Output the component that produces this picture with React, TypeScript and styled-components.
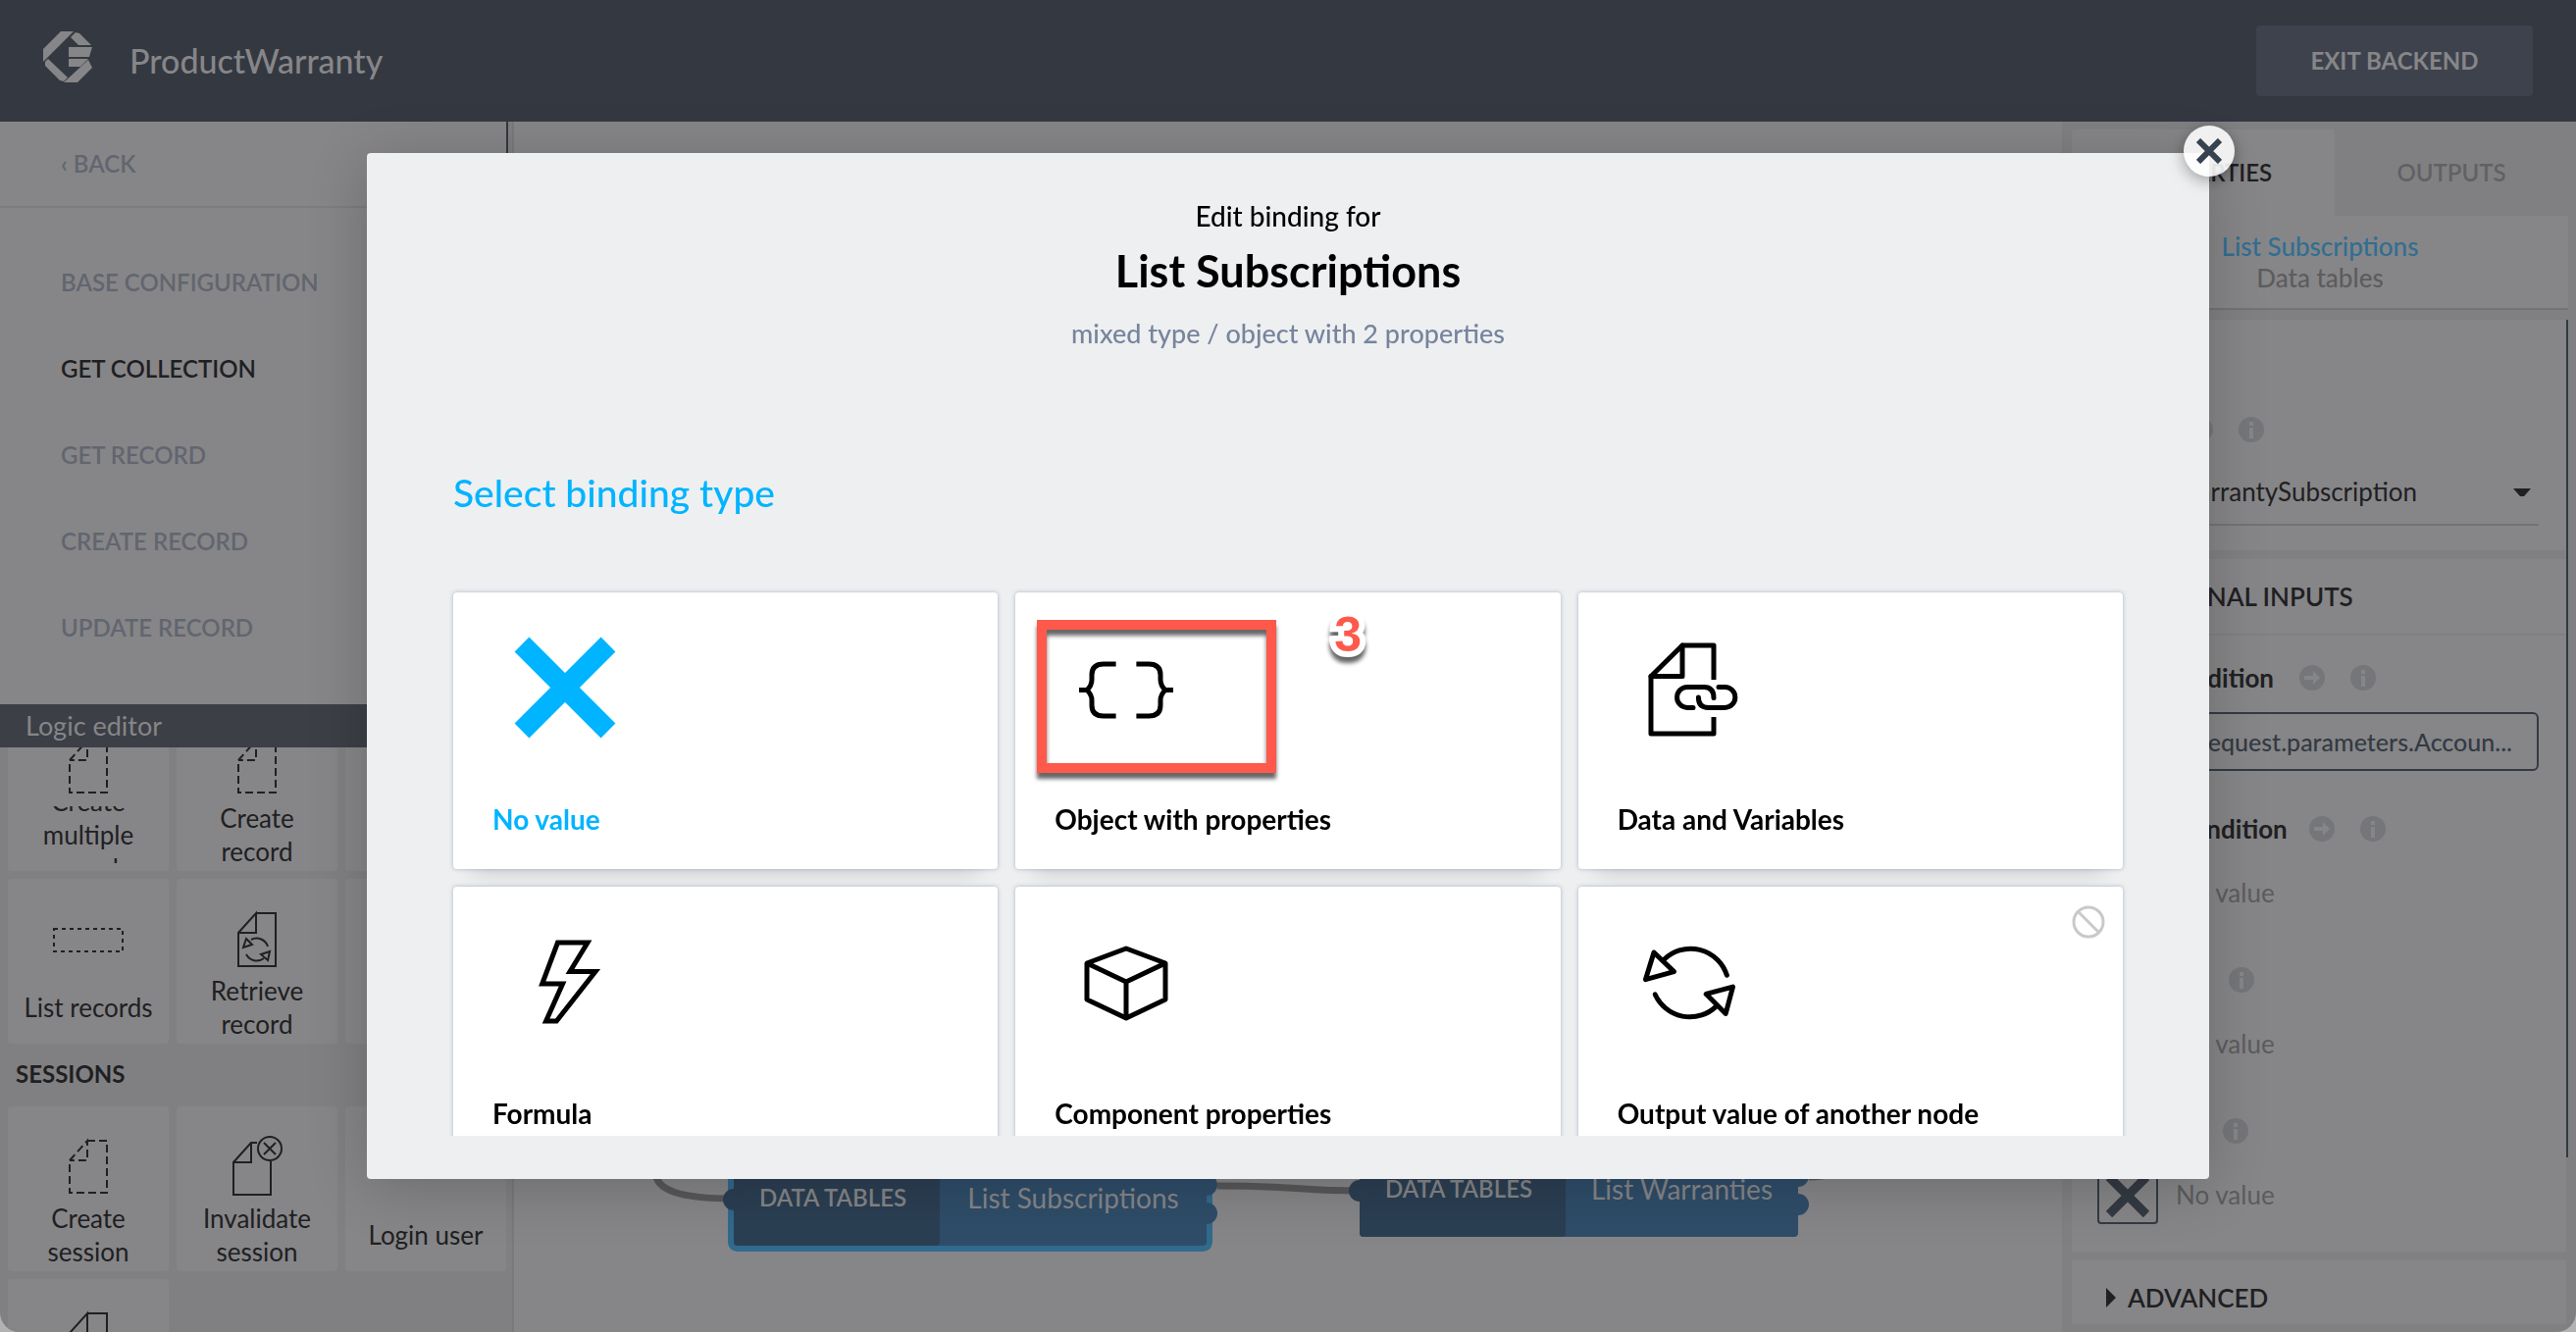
import React from "react";
import styled, { createGlobalStyle, css } from "styled-components";

const c = {
  header: "#343841",
  headerBtn: "#3e424d",
  surface: "#868688",
  backdrop: "#808082",
  line: "#7d7d7f",
  ink: "#1f2022",
  slate: "#343a43",
  muted: "#5c5c5e",
  menu: "#62656f",
  blue: "#00b4ff",
  dimBlue: "#316e92",
  modal: "#eeeff1",
  red: "#ff594b",
};

const Global = createGlobalStyle`
  *, *::before, *::after { box-sizing: border-box; }
  body {
    margin: 0;
    background: #b2b2b2;
    font-family: Lato, "Open Sans", sans-serif;
    font-size: 26px;
    line-height: 34px;
    color: ${c.ink};
  }
  button, input, select { font: inherit; color: inherit; margin: 0; }
  h1, h2, h3, p, ul { margin: 0; padding: 0; font: inherit; }
`;

const Window = styled.div`
  height: 100vh;
  display: flex;
  flex-direction: column;
  overflow: hidden;
  border-radius: 0 0 20px 20px;
  background: ${c.backdrop};
`;

/* ---------- header ---------- */

const Header = styled.header`
  flex: none;
  height: 124px;
  padding: 0 44px;
  display: flex;
  align-items: center;
  background: ${c.header};
  color: ${c.surface};
`;

const Logo = styled.svg`
  width: 50px;
  height: 52px;
  margin-bottom: 8px;
  fill: ${c.surface};
`;

const AppName = styled.h1`
  flex: 1;
  margin-left: 38px;
  font-size: 34px;
  font-weight: 500;
`;

const ExitButton = styled.button`
  width: 282px;
  height: 72px;
  border: 0;
  border-radius: 4px;
  background: ${c.headerBtn};
  font-size: 24px;
  font-weight: 700;
`;

const Body = styled.div`
  flex: 1;
  min-height: 0;
  display: flex;
`;

/* ---------- left side ---------- */

const Sidebar = styled.aside`
  width: 524px;
  flex: none;
  display: flex;
  flex-direction: column;
  border-right: 2px solid #79797b;
`;

const Menu = styled.nav`
  flex: none;
  height: 594px;
  margin-right: 4px;
  overflow: hidden;
  background: ${c.surface};
  border-right: 2px solid ${c.header};
  font-size: 24px;
  font-weight: 600;
`;

const MenuBack = styled.a`
  display: flex;
  align-items: center;
  height: 88px;
  padding-left: 62px;
  border-bottom: 2px solid ${c.line};
  color: ${c.menu};
  text-decoration: none;
`;

const MenuList = styled.ul`
  list-style: none;
  padding-top: 32px;
`;

const MenuLink = styled.a<{ $active?: boolean }>`
  display: flex;
  align-items: center;
  height: 88px;
  padding-left: 62px;
  color: ${(p) => (p.$active ? c.ink : c.menu)};
  text-decoration: none;
`;

const EditorBar = styled.div`
  flex: none;
  height: 44px;
  padding-left: 26px;
  display: flex;
  align-items: center;
  background: #3c3f46;
  color: ${c.surface};
  font-size: 27px;
`;

const Palette = styled.div`
  flex: 1;
  min-height: 0;
  overflow: hidden;
  padding: 0 6px 0 8px;
`;

const TileGrid = styled.div<{ $scrolled?: boolean }>`
  display: grid;
  grid-template-columns: repeat(3, 1fr);
  gap: 8px;
  margin-top: ${(p) => (p.$scrolled ? "-42px" : "0")};
`;

const TileButton = styled.button`
  height: 168px;
  padding: 34px 4px 8px;
  display: flex;
  flex-direction: column;
  align-items: center;
  justify-content: space-between;
  border: 0;
  border-radius: 4px;
  background: ${c.surface};
`;

const TileLabel = styled.span`
  height: 58px;
  width: 100%;
  display: flex;
  flex-direction: column;
  justify-content: center;
  overflow: hidden;
  text-align: center;
  span { flex: none; white-space: nowrap; }
`;

const GroupTitle = styled.h3`
  height: 64px;
  padding: 0 8px 2px;
  display: flex;
  align-items: center;
  font-size: 24px;
  font-weight: 700;
`;

const TileIcon = styled.svg`
  width: 72px;
  height: 56px;
  flex: none;
  fill: none;
  stroke: ${c.ink};
  stroke-width: 2;
  overflow: visible;
`;

/* ---------- canvas ---------- */

const Canvas = styled.main`
  flex: 1;
  min-width: 0;
  position: relative;
  overflow: hidden;
  background: ${c.surface};
`;

const Wires = styled.svg`
  position: absolute;
  inset: 0;
  width: 100%;
  height: 100%;
  fill: none;
  stroke: #58585a;
  stroke-width: 7;
`;

const FlowNode = styled.div<{ $x: number; $y: number; $w: number; $selected?: boolean }>`
  position: absolute;
  left: ${(p) => p.$x}px;
  top: ${(p) => p.$y}px;
  width: ${(p) => p.$w}px;
  height: 98px;
  display: flex;
  border-radius: 4px;
  background: #2f4d69;
  color: ${c.surface};
  ${(p) => p.$selected && css`box-shadow: 0 0 0 6px #316a8c;`}
`;

const NodeKind = styled.span`
  width: 210px;
  padding-right: 8px;
  display: flex;
  align-items: center;
  justify-content: center;
  border-radius: 4px;
  background: #2b3f53;
  font-size: 24px;
  font-weight: 600;
`;

const NodeName = styled.span`
  flex: 1;
  display: flex;
  align-items: center;
  justify-content: center;
  font-size: 28px;
`;

const Port = styled.i<{ $side: "left" | "right"; $y: number }>`
  position: absolute;
  ${(p) => p.$side}: -11px;
  top: ${(p) => p.$y}px;
  width: 22px;
  height: 22px;
  border-radius: 50%;
  background: ${(p) => (p.$side === "left" ? "#2b3f53" : "#2f4d69")};
`;

/* ---------- inspector ---------- */

const Inspector = styled.aside`
  width: 524px;
  flex: none;
  padding: 8px 8px 8px 10px;
  display: flex;
  flex-direction: column;
`;

const Tabs = styled.div`
  flex: none;
  height: 88px;
  display: flex;
`;

const Tab = styled.button<{ $active?: boolean }>`
  width: ${(p) => (p.$active ? "268px" : "auto")};
  flex: ${(p) => (p.$active ? "none" : "1")};
  border: 0;
  border-radius: 4px 4px 0 0;
  background: ${(p) => (p.$active ? c.surface : "transparent")};
  color: ${(p) => (p.$active ? c.ink : "#616163")};
  font-size: 24px;
  font-weight: 600;
`;

const Subject = styled.div`
  flex: none;
  height: 96px;
  padding-top: 15px;
  border-bottom: 2px solid #737375;
  background: ${c.surface};
  text-align: center;
  line-height: 32px;
  font-size: 26px;
  font-weight: 500;
  strong { display: block; font-weight: 500; color: ${c.dimBlue}; }
  span { color: ${c.muted}; }
`;

const Scroller = styled.div`
  flex: 1;
  min-height: 0;
  margin-top: 10px;
  display: flex;
`;

const ScrollContent = styled.div`
  flex: 1;
  min-width: 0;
  overflow: hidden;
`;

const ScrollThumb = styled.div`
  width: 2px;
  height: 854px;
  background: ${c.header};
`;

const Section = styled.section<{ $top: number; $bottom: number }>`
  padding: ${(p) => p.$top}px 28px ${(p) => p.$bottom}px 26px;
  margin-bottom: 9px;
  background: ${c.surface};
`;

const SectionTitle = styled.h2`
  height: 78px;
  padding: 0 35px;
  display: flex;
  align-items: center;
  gap: 12px;
  border-bottom: 2px solid #808082;
  background: ${c.surface};
  font-size: 26px;
  font-weight: 600;
`;

const Field = styled.div`
  height: 154px;
  &:last-child { height: 145px; }
`;

const FieldHead = styled.div`
  height: 44px;
  display: flex;
  align-items: center;
  gap: 26px;
`;

const FieldLabel = styled.label<{ $w: number }>`
  width: ${(p) => p.$w}px;
  text-align: right;
  white-space: nowrap;
  font-size: 26px;
  font-weight: 700;
`;

const Badge = styled.svg`
  width: 26px;
  height: 26px;
  flex: none;
  fill: #757679;
`;

const TextInput = styled.input`
  display: block;
  width: 100%;
  height: 60px;
  margin-top: 13px;
  padding: 0 25px;
  border: 2px solid ${c.slate};
  border-radius: 6px;
  background: transparent;
  color: ${c.slate};
  font-size: 25px;
  font-weight: 500;
  text-align: right;
`;

const SelectWrap = styled.div`
  position: relative;
  margin-top: 8px;
  border-bottom: 2px solid #737375;
`;

const Select = styled.select`
  width: 100%;
  height: 66px;
  padding: 0 124px 0 0;
  border: 0;
  appearance: none;
  background: transparent;
  text-align: right;
  text-align-last: right;
`;

const Caret = styled.svg`
  position: absolute;
  right: 8px;
  top: 30px;
  width: 18px;
  height: 8px;
  fill: ${c.ink};
`;

const NoValue = styled.div`
  display: flex;
  align-items: center;
  gap: 18px;
  margin-top: 13px;
  color: ${c.muted};
`;

const BindButton = styled.button`
  width: 62px;
  height: 60px;
  padding: 6px;
  border: 2px solid ${c.slate};
  border-radius: 4px;
  background: transparent;
  svg { display: block; width: 46px; height: 46px; stroke: ${c.slate}; stroke-width: 9; fill: none; }
`;

/* ---------- dialog ---------- */

const Overlay = styled.div`
  position: fixed;
  inset: 0;
  padding: 156px 374px;
  display: flex;
`;

const Dialog = styled.div`
  position: relative;
  flex: 1;
  min-width: 0;
  display: flex;
  flex-direction: column;
  padding: 44px 88px;
  border-radius: 4px;
  background: ${c.modal};
  box-shadow: 0 8px 60px rgba(0, 0, 0, 0.2);
  color: #000;
`;

const CloseButton = styled.button`
  position: absolute;
  right: -26px;
  top: -28px;
  width: 52px;
  height: 52px;
  padding: 13px;
  border: 0;
  border-radius: 50%;
  background: rgba(255, 255, 255, 0.88);
  box-shadow: 0 4px 16px rgba(0, 0, 0, 0.35);
  svg { display: block; width: 26px; height: 26px; stroke: #37424f; stroke-width: 6; }
`;

const DialogHead = styled.div`
  height: 264px;
  text-align: center;
`;

const Eyebrow = styled.p`
  font-size: 28px;
  font-weight: 500;
  line-height: 40px;
`;

const DialogTitle = styled.h2`
  font-size: 45px;
  font-weight: 700;
  line-height: 72px;
`;

const TypeNote = styled.p`
  font-size: 27px;
  font-weight: 500;
  line-height: 56px;
  color: #76859c;
`;

const StepTitle = styled.h3`
  height: 136px;
  font-size: 39px;
  font-weight: 500;
  line-height: 76px;
  color: ${c.blue};
`;

const CardScroll = styled.div`
  flex: 1;
  min-height: 0;
  overflow: hidden;
  margin: 0 -20px;
  padding: 4px 20px 0;
`;

const CardGrid = styled.div`
  display: grid;
  grid-template-columns: repeat(3, 1fr);
  grid-auto-rows: 282px;
  gap: 18px;
`;

const Card = styled.button<{ $active?: boolean }>`
  position: relative;
  display: flex;
  flex-direction: column;
  align-items: flex-start;
  padding: 38px 40px 32px;
  border: 0;
  border-radius: 4px;
  background: #fff;
  color: ${(p) => (p.$active ? c.blue : "#000")};
  box-shadow: 0 0 4px rgba(110, 120, 150, 0.5), 0 24px 20px -20px rgba(0, 0, 0, 0.14);
  font-size: 28px;
  font-weight: 700;
`;

const CardIcon = styled.svg`
  width: 120px;
  height: 120px;
  margin: 0 0 56px 14px;
  fill: none;
  stroke: currentColor;
  stroke-width: 5;
`;

const Blocked = styled.svg`
  position: absolute;
  top: 19px;
  right: 18px;
  width: 34px;
  height: 34px;
  fill: none;
  stroke: #c9c9c9;
  stroke-width: 3;
`;

const Highlight = styled.span`
  position: absolute;
  left: 22px;
  top: 28px;
  width: 244px;
  height: 156px;
  border: 10px solid ${c.red};
  box-shadow: 0 6px 4px rgba(0, 0, 0, 0.6), inset 0 6px 4px rgba(0, 0, 0, 0.6);
`;

const StepNumber = styled.span`
  position: absolute;
  left: 325px;
  top: 13px;
  font: 700 50px/60px "Liberation Sans", Arial, sans-serif;
  color: ${c.red};
  -webkit-text-stroke: 12px #fff;
  paint-order: stroke fill;
  stroke-linejoin: round;
  filter: drop-shadow(0 6px 2px rgba(0, 0, 0, 0.6));
`;

/* ---------- drawings ---------- */

const DashedDoc = () => (
  <TileIcon viewBox="0 0 72 56" strokeDasharray="8 4">
    <path d="M35 1H55V54H17V21L35 1V21H17" />
  </TileIcon>
);

const PlainDoc = () => (
  <TileIcon viewBox="0 0 72 56">
    <path d="M35 1H55V54H17V21L35 1V21H17" />
  </TileIcon>
);

const ListIcon = () => (
  <TileIcon viewBox="0 0 72 56" strokeDasharray="4 4">
    <rect x="1" y="17" width="70" height="23" />
  </TileIcon>
);

const SyncDoc = () => (
  <TileIcon viewBox="0 0 72 56">
    <path d="M35 1H55V55H17V21L35 1V21H17" />
    <path d="M47 35A12 12 0 0 0 30 28M25 43A12 12 0 0 0 43 47" />
    <path d="M25 27L31 33L22 36ZM49 40L47 49L40 43Z" />
  </TileIcon>
);

const CancelDoc = () => (
  <TileIcon viewBox="0 0 72 56">
    <path d="M50 22V56H12V23L30 3H36M30 3V23H12" />
    <circle cx="49" cy="9" r="12" />
    <path d="M43 3L55 15M55 3L43 15" />
  </TileIcon>
);

const InfoBadge = () => (
  <Badge viewBox="0 0 26 26">
    <circle cx="13" cy="13" r="13" />
    <path d="M11 5H15V9H11ZM11 11H15V22H11Z" fill={c.surface} />
  </Badge>
);

const ArrowBadge = () => (
  <Badge viewBox="0 0 26 26">
    <circle cx="13" cy="13" r="13" />
    <path d="M5 11H14V6L21 13L14 20V15H5Z" fill={c.surface} />
  </Badge>
);

const Cross = () => (
  <svg viewBox="0 0 46 46">
    <path d="M4 4L42 42M42 4L4 42" />
  </svg>
);

const Disclosure = () => (
  <svg width="10" height="20" viewBox="0 0 10 20">
    <path d="M0 0L10 10L0 20Z" fill={c.ink} />
  </svg>
);

const cardIcons = {
  none: <path d="M16 15L104 103M104 15L16 103" strokeWidth="21" />,
  object: (
    <path d="M48.6 35H36Q24 35 24 46V51Q24 57 19 61.5Q24 66 24 72V77Q24 88 36 88H48.6M11 61.5H20M69.4 35H82Q94 35 94 46V51Q94 57 99 61.5Q94 66 94 72V77Q94 88 82 88H69.4M107 61.5H98" />
  ),
  data: (
    <g strokeLinecap="round" strokeLinejoin="round">
      <path d="M84 51V16H52L20 47.500V106H84V89" strokeLinecap="butt" />
      <path d="M52 16V47.500H20" />
      <path d="M84 69.500Q84 58.500 74 58.500H57A10.400 10.400 0 0 0 57 79.400H63" />
      <path d="M68.400 69Q68.400 79.400 78.500 79.400H95.400A10.400 10.400 0 0 0 95.400 58.500H89" />
    </g>
  ),
  formula: <path d="M52.500 19H83L65 48.500H91L51.300 99H40.600L57.600 61H36.700Z" />,
  component: (
    <g strokeLinejoin="round">
      <path d="M59 25L99 40V77L59 96L19 77V40ZM19 40L59 59L99 40M59 59V96" />
    </g>
  ),
  output: (
    <g strokeLinecap="round" strokeLinejoin="round">
      <path d="M97.400 52.300A38.700 38.700 0 0 0 33.300 36.300M24.300 71.900A38.700 38.700 0 0 0 86.400 84.100" />
      <path d="M23 29L43.500 48.600L14.500 56.600ZM103.500 64.100L96.200 91.400L76.200 71.400Z" />
    </g>
  ),
};

/* ---------- data ---------- */

const menuItems = ["BASE CONFIGURATION", "GET COLLECTION", "GET RECORD", "CREATE RECORD", "UPDATE RECORD", "REPLACE RECORD"];

const cards: { label: string; icon: keyof typeof cardIcons; active?: boolean; marked?: boolean; blocked?: boolean }[] = [
  { label: "No value", icon: "none", active: true },
  { label: "Object with properties", icon: "object", marked: true },
  { label: "Data and Variables", icon: "data" },
  { label: "Formula", icon: "formula" },
  { label: "Component properties", icon: "component" },
  { label: "Output value of another node", icon: "output", blocked: true },
];

const Tile = ({ lines, icon }: { lines: string[]; icon?: React.ReactNode }) => (
  <TileButton type="button">
    {icon ?? <TileIcon viewBox="0 0 72 56" />}
    <TileLabel>
      {lines.map((l) => (
        <span key={l}>{l}</span>
      ))}
    </TileLabel>
  </TileButton>
);

const Head = ({ id, label, width }: { id: string; label: string; width: number }) => (
  <FieldHead>
    <FieldLabel htmlFor={id} $w={width}>{label}</FieldLabel>
    <ArrowBadge />
    <InfoBadge />
  </FieldHead>
);

const EmptyField = ({ id, label, width }: { id: string; label: string; width: number }) => (
  <Field>
    <Head id={id} label={label} width={width} />
    <NoValue>
      <BindButton type="button" id={id} aria-label={`Edit ${label}`}><Cross /></BindButton>
      No value
    </NoValue>
  </Field>
);

export default function App() {
  return (
    <>
      <Global />
      <Window>
        <Header>
          <Logo viewBox="0 0 50 52">
            <path d="M18 0H31L0 31V18Z" />
            <path d="M33 1L37 2L49 14H36L28 6Z" />
            <path d="M26 16H50L47 26H26Z" />
            <path d="M26 28H46L38 36H26Z" />
            <path d="M46 29L50 37L35 52H21Z" />
            <path d="M5 28L25 47L21 51L17 50L2 35V31Z" />
          </Logo>
          <AppName>ProductWarranty</AppName>
          <ExitButton type="button">EXIT BACKEND</ExitButton>
        </Header>
        <Body>
          <Sidebar>
            <Menu>
              <MenuBack href="#back">‹ BACK</MenuBack>
              <MenuList>
                {menuItems.map((m) => (
                  <li key={m}>
                    <MenuLink href="#section" $active={m === "GET COLLECTION"}>{m}</MenuLink>
                  </li>
                ))}
              </MenuList>
            </Menu>
            <EditorBar>Logic editor</EditorBar>
            <Palette>
              <TileGrid $scrolled>
                <Tile lines={["Create", "multiple", "records"]} icon={<DashedDoc />} />
                <Tile lines={["Create", "record"]} icon={<DashedDoc />} />
                <Tile lines={[]} />
                <Tile lines={["List records"]} icon={<ListIcon />} />
                <Tile lines={["Retrieve", "record"]} icon={<SyncDoc />} />
                <Tile lines={[]} />
              </TileGrid>
              <GroupTitle>SESSIONS</GroupTitle>
              <TileGrid>
                <Tile lines={["Create", "session"]} icon={<DashedDoc />} />
                <Tile lines={["Invalidate", "session"]} icon={<CancelDoc />} />
                <Tile lines={["Login user"]} />
                <Tile lines={[]} icon={<PlainDoc />} />
              </TileGrid>
            </Palette>
          </Sidebar>

          <Canvas>
            <Wires>
              <path d="M144 1070C144 1090 170 1098 224 1098M717 1085C800 1085 800 1090 860 1090M1320 1076C1340 1076 1345 1072 1350 1060" />
            </Wires>
            <FlowNode $x={224} $y={1048} $w={482} $selected>
              <Port $side="left" $y={40} />
              <Port $side="right" $y={25} />
              <Port $side="right" $y={54} />
              <NodeKind>DATA TABLES</NodeKind>
              <NodeName>List Subscriptions</NodeName>
            </FlowNode>
            <FlowNode $x={862} $y={1039} $w={447}>
              <Port $side="left" $y={40} />
              <Port $side="right" $y={25} />
              <Port $side="right" $y={54} />
              <NodeKind>DATA TABLES</NodeKind>
              <NodeName>List Warranties</NodeName>
            </FlowNode>
          </Canvas>

          <Inspector>
            <Tabs>
              <Tab type="button" $active>PROPERTIES</Tab>
              <Tab type="button">OUTPUTS</Tab>
            </Tabs>
            <Subject>
              <strong>List Subscriptions</strong>
              <span>Data tables</span>
            </Subject>
            <Scroller>
              <ScrollContent>
                <Section $top={90} $bottom={25}>
                  <Head id="entity" label="Entity" width={66} />
                  <SelectWrap>
                    <Select id="entity" defaultValue="s">
                      <option value="s">WarrantySubscription</option>
                    </Select>
                    <Caret viewBox="0 0 18 8"><path d="M0 0H18L11 8H7Z" /></Caret>
                  </SelectWrap>
                </Section>
                <SectionTitle>
                  <Disclosure />
                  OPTIONAL INPUTS
                </SectionTitle>
                <Section $top={21} $bottom={0}>
                  <Field>
                    <Head id="filter" label="Filter condition" width={180} />
                    <TextInput id="filter" readOnly value="request.parameters.Accoun..." />
                  </Field>
                  <EmptyField id="search" label="Search condition" width={190} />
                  <EmptyField id="limit" label="Limit" width={56} />
                  <EmptyField id="skip" label="Skip" width={50} />
                </Section>
                <SectionTitle>
                  <Disclosure />
                  ADVANCED
                </SectionTitle>
              </ScrollContent>
              <ScrollThumb />
            </Scroller>
          </Inspector>
        </Body>
      </Window>

      <Overlay>
        <Dialog role="dialog" aria-labelledby="dialog-title">
          <DialogHead>
            <Eyebrow>Edit binding for</Eyebrow>
            <DialogTitle id="dialog-title">List Subscriptions</DialogTitle>
            <TypeNote>mixed type / object with 2 properties</TypeNote>
          </DialogHead>
          <StepTitle>Select binding type</StepTitle>
          <CardScroll>
            <CardGrid>
              {cards.map((card) => (
                <Card key={card.label} type="button" $active={card.active}>
                  <CardIcon viewBox="0 0 120 120">{cardIcons[card.icon]}</CardIcon>
                  {card.label}
                  {card.blocked && (
                    <Blocked viewBox="0 0 34 34">
                      <circle cx="17" cy="17" r="15" />
                      <path d="M6.500 6.500L27.500 27.500" />
                    </Blocked>
                  )}
                  {card.marked && (
                    <>
                      <Highlight />
                      <StepNumber>3</StepNumber>
                    </>
                  )}
                </Card>
              ))}
            </CardGrid>
          </CardScroll>
          <CloseButton type="button" aria-label="Close">
            <svg viewBox="0 0 26 26"><path d="M2 2L24 24M24 2L2 24" /></svg>
          </CloseButton>
        </Dialog>
      </Overlay>
    </>
  );
}
